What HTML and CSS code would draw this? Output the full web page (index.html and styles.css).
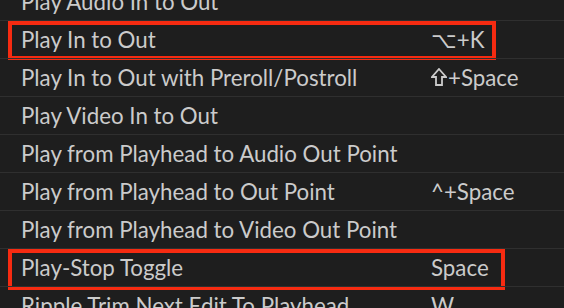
FILE: index.html
```html
<!DOCTYPE html>
<html lang="en">
<head>
    <meta charset="UTF-8">
    <meta name="viewport" content="width=device-width, initial-scale=1.0">
    <title>Keyboard Shortcuts</title>
    <link rel="stylesheet" href="styles.css">
</head>
<body>
    <div class="command-list">
        <div class="command"><span class="name">Play Audio In to Out</span><span class="keys"></span></div>
        <div class="command">
            <span class="name">Play In to Out</span><span class="keys">⌥+K</span>
            <div class="mark mark-short"></div>
        </div>
        <div class="command">
            <span class="name">Play In to Out with Preroll/Postroll</span>
            <span class="keys"><svg class="shift" width="16" height="18" viewBox="0 0 16 18"><path d="M8 1 L15 9 L11 9 L11 17 L5 17 L5 9 L1 9 Z" fill="none" stroke="#cbcbcb" stroke-width="1.8"/></svg>+Space</span>
        </div>
        <div class="command"><span class="name">Play Video In to Out</span><span class="keys"></span></div>
        <div class="command"><span class="name">Play from Playhead to Audio Out Point</span><span class="keys"></span></div>
        <div class="command"><span class="name">Play from Playhead to Out Point</span><span class="keys">^+Space</span></div>
        <div class="command"><span class="name">Play from Playhead to Video Out Point</span><span class="keys"></span></div>
        <div class="command">
            <span class="name">Play-Stop Toggle</span><span class="keys">Space</span>
            <div class="mark mark-long"></div>
        </div>
        <div class="command"><span class="name">Ripple Trim Next Edit To Playhead</span><span class="keys">W</span></div>
    </div>
</body>
</html>
```

FILE: styles.css
```css
body {
    margin: 0;
    background-color: #1e1e1e;
    color: #cbcbcb;
    font-family: Lato, "DejaVu Sans", sans-serif;
    font-size: 22.3px;
    overflow: hidden;
}
.command-list {
    margin-top: -18px;
}
.command {
    position: relative;
    display: flex;
    align-items: center;
    height: 37px;
    border-top: 1px solid #2f2f2f;
}
.command:first-child {
    border-top: none;
    height: 38px;
}
.name {
    width: 410px;
    flex-shrink: 0;
    padding-left: 21px;
    white-space: nowrap;
}
.keys {
    white-space: nowrap;
    display: flex;
    align-items: center;
}
.shift {
    flex-shrink: 0;
    margin-right: 1px;
    margin-bottom: 2px;
}
/* red highlight frame around a row */
.mark {
    position: absolute;
    left: 8px;
    top: 0;
    border: 4px solid #f62b11;
    box-sizing: border-box;
}
.mark-short {
    width: 488px;
    height: 39px;
}
.mark-long {
    width: 497px;
    height: 41px;
}
```
